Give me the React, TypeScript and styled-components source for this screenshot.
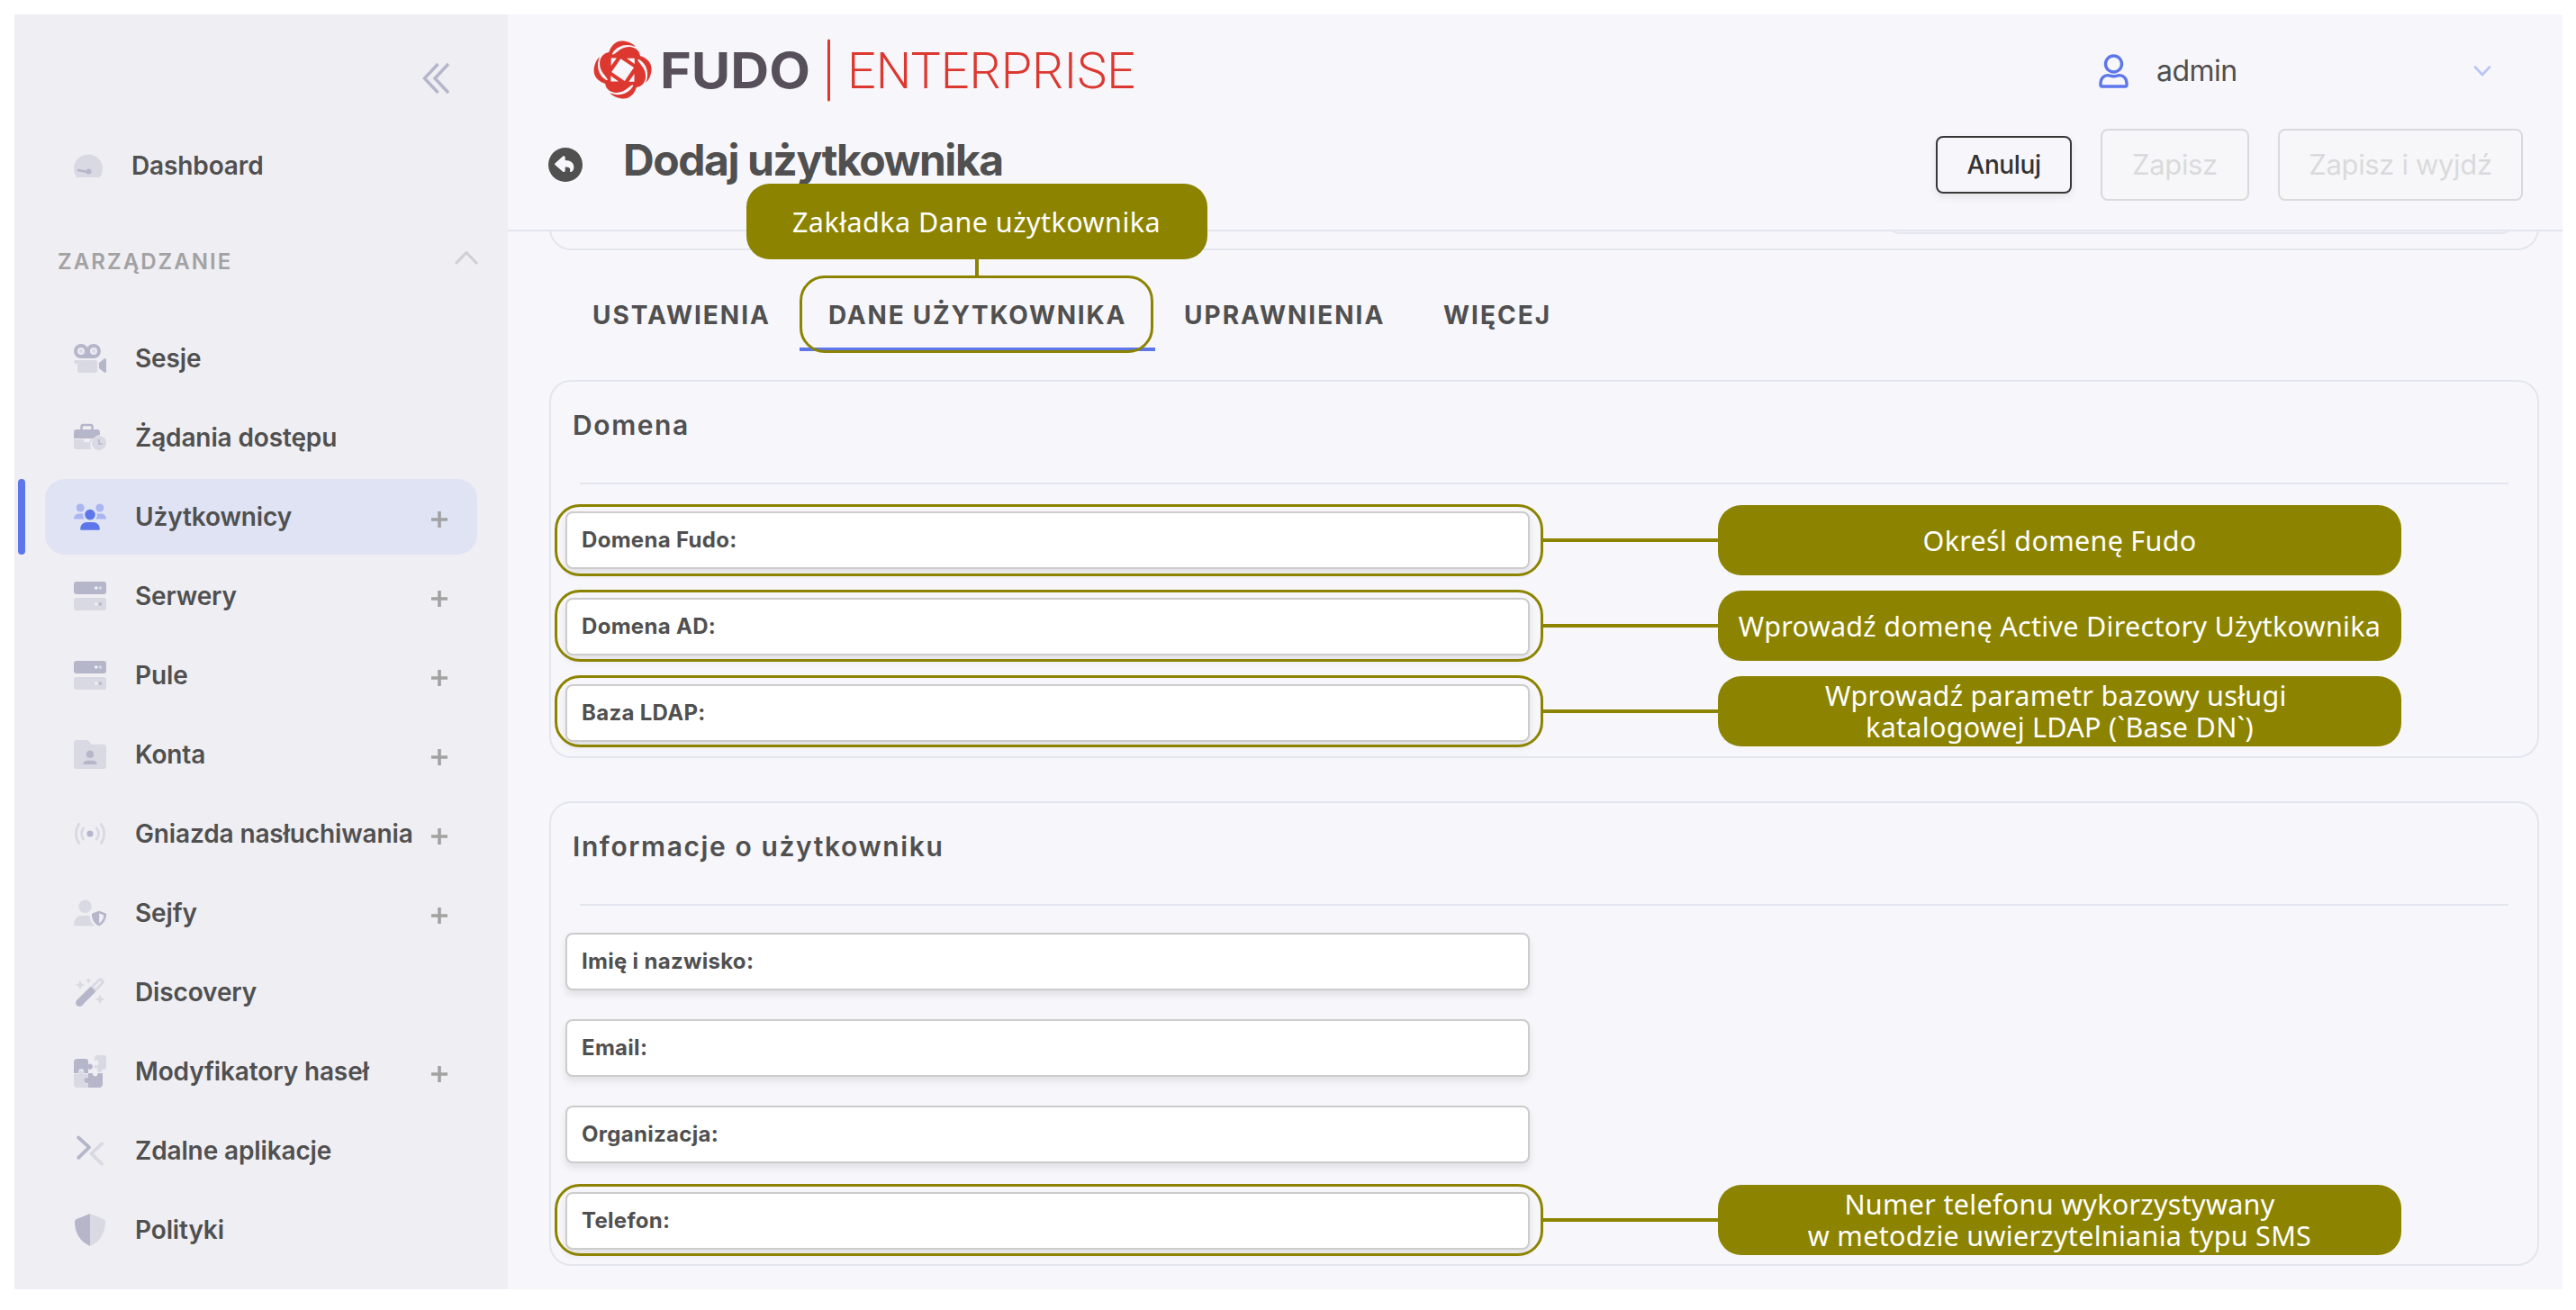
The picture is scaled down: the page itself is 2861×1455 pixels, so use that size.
import React from "react";
import styled, { createGlobalStyle } from "styled-components";

const color = {
  page: "#ffffff",
  sidebar: "#efeef3",
  main: "#f7f6fb",
  line: "#e3e6ee",
  text: "#505050",
  muted: "#a2a2a2",
  iconDark: "#b5b6ca",
  iconLight: "#d9d9e3",
  accent: "#5d77ea",
  accentLight: "#aab6f1",
  note: "#8c8400",
  disabled: "#dadadc",
};

const GlobalStyle = createGlobalStyle`
  * { box-sizing: border-box; }
  body {
    margin: 0;
    background: ${color.page};
    color: ${color.text};
    font-family: Inter, "Liberation Sans", sans-serif;
    -webkit-font-smoothing: antialiased;
  }
`;

/* ---------- frame ---------- */

const Frame = styled.div`
  display: flex;
  width: 2861px;
  height: 1455px;
  padding: 16px 15px 23px 16px;
  overflow: hidden;
`;

const Sidebar = styled.aside`
  flex: none;
  width: 548px;
  background: ${color.sidebar};
  display: flex;
  flex-direction: column;
`;

const Main = styled.main`
  flex: 1;
  min-width: 0;
  background: ${color.main};
  display: flex;
  flex-direction: column;
`;

/* ---------- sidebar ---------- */

const CollapseBar = styled.div`
  height: 126px;
  padding: 15px 64px 0 0;
  display: flex;
  align-items: center;
  justify-content: flex-end;
`;

const SectionHeader = styled.div`
  height: 130px;
  padding: 0 33px 0 48px;
  display: flex;
  align-items: center;
  justify-content: space-between;
`;

const SectionTitle = styled.span`
  font-size: 24px;
  font-weight: 600;
  letter-spacing: 2.05px;
  line-height: 30px;
  color: ${color.muted};
`;

const SectionToggle = styled.span`
  display: flex;
  padding-bottom: 11px;
`;

const NavList = styled.nav`
  display: flex;
  flex-direction: column;
  gap: 4px;
`;

const NavRow = styled.a<{ $active?: boolean }>`
  position: relative;
  flex: none;
  height: 84px;
  width: 480px;
  margin-left: 34px;
  padding: 0 33px 0 32px;
  border-radius: 22px;
  display: flex;
  align-items: center;
  background: ${(p) => (p.$active ? "#dfe3f4" : "transparent")};

  &::before {
    content: "";
    display: ${(p) => (p.$active ? "block" : "none")};
    position: absolute;
    left: -30px;
    top: 0;
    width: 8px;
    height: 84px;
    border-radius: 4px;
    background: ${color.accent};
  }
`;

const NavGlyph = styled.span`
  flex: none;
  display: flex;
  margin-right: 32px;
`;

const NavLabel = styled.span`
  flex: 1;
  min-width: 0;
  font-size: 28px;
  font-weight: 600;
  line-height: 34px;
  letter-spacing: -0.13px;
  white-space: nowrap;
`;

const AddMark = styled.span`
  flex: none;
  display: flex;
  padding-top: 6px;
`;

/* ---------- header ---------- */

const Header = styled.header`
  position: relative;
  z-index: 1;
  flex: none;
  height: 241px;
  border-bottom: 2px solid ${color.line};
  background: ${color.main};
  display: flex;
  flex-direction: column;
`;

const BrandRow = styled.div`
  height: 124px;
  padding: 0 79px 0 94px;
  display: flex;
  align-items: center;
  justify-content: space-between;
`;

const UserMenu = styled.div`
  width: 436px;
  padding-top: 2px;
  display: flex;
  align-items: center;
`;

const UserName = styled.span`
  flex: 1;
  padding-left: 31px;
  font-size: 32px;
  line-height: 40px;
  letter-spacing: -0.5px;
`;

const TitleRow = styled.div`
  height: 86px;
  padding: 0 44px 0 45px;
  display: flex;
  align-items: center;
`;

const Title = styled.h1`
  flex: 1;
  margin: 0;
  padding: 0 0 11px 45px;
  font-size: 48px;
  font-weight: 700;
  line-height: 58px;
  letter-spacing: -1.45px;
`;

const Actions = styled.div`
  display: flex;
  align-items: center;
  gap: 32px;
`;

const Button = styled.button<{ $width: number }>`
  width: ${(p) => p.$width}px;
  height: 64px;
  padding: 0;
  border: 2px solid #383838;
  border-radius: 8px;
  background: transparent;
  box-shadow: 0 4px 8px rgba(0, 0, 0, 0.08);
  font: 500 28px/34px Inter, sans-serif;
  letter-spacing: -0.4px;
  color: #333333;

  &:disabled {
    height: 80px;
    border-color: ${color.disabled};
    background: #f7f7f9;
    box-shadow: none;
    font-size: 31px;
    font-weight: 400;
    letter-spacing: -0.35px;
    color: ${color.disabled};
  }
`;

/* ---------- content ---------- */

const Content = styled.section`
  flex: 1;
  min-height: 0;
  padding: 0 26px 0 46px;
  display: flex;
  flex-direction: column;
`;

const ScrolledPanel = styled.div`
  flex: none;
  height: 81px;
  margin-top: -60px;
  padding: 0 26px 16px;
  border: 2px solid ${color.line};
  border-radius: 24px;
  display: flex;
  justify-content: flex-end;
`;

const ScrolledInner = styled.div`
  width: 696px;
  border: 2px solid ${color.line};
  border-radius: 14px;
`;

const Tabs = styled.div`
  flex: none;
  height: 144px;
  padding: 28px 0 0 16px;
  display: flex;
  align-items: flex-start;
`;

const Tab = styled.div<{ $width: number; $active?: boolean }>`
  position: relative;
  width: ${(p) => p.$width}px;
  height: 84px;
  padding: 8px 0 0 32px;
  border-bottom: 4px solid ${(p) => (p.$active ? color.accent : "transparent")};
  display: flex;
  align-items: center;
  font-size: 28px;
  font-weight: 700;
  letter-spacing: ${(p) => (p.$active ? 1.78 : 2)}px;
  white-space: nowrap;
`;

const Panel = styled.section`
  flex: none;
  margin-bottom: 48px;
  padding: 0 32px 16px 16px;
  border: 2px solid ${color.line};
  border-radius: 24px;
`;

const PanelTitle = styled.h2`
  margin: 0;
  height: 112px;
  padding: 29px 0 0 8px;
  font-size: 30px;
  font-weight: 600;
  line-height: 38px;
  letter-spacing: 1.6px;
`;

const PanelRule = styled.hr`
  height: 2px;
  margin: 0 0 30px 16px;
  border: 0;
  background: ${color.line};
`;

const Fields = styled.div`
  display: flex;
  flex-direction: column;
  gap: 32px;
`;

const Field = styled.div`
  position: relative;
  width: 1071px;
  height: 64px;
  padding-left: 16px;
  border: 2px solid #cccccc;
  border-radius: 8px;
  background: #ffffff;
  box-shadow: 0 5px 8px rgba(0, 0, 0, 0.09);
  display: flex;
  align-items: center;
`;

const FieldLabel = styled.label`
  font-size: 24px;
  font-weight: 700;
  line-height: 30px;
  letter-spacing: 0.3px;
`;

/* ---------- annotations laid over the form ---------- */

const FieldNote = styled.div<{ $top: number }>`
  position: absolute;
  left: -14px;
  top: ${(p) => p.$top - 3}px;
  height: 80px;
  display: flex;
  align-items: center;
`;

const NoteOutline = styled.span`
  width: 1098px;
  height: 80px;
  border: 3px solid ${color.note};
  border-radius: 28px;
`;

const NoteLink = styled.span`
  width: 194px;
  height: 4px;
  background: ${color.note};
`;

const NoteBox = styled.span`
  width: 759px;
  height: 78px;
  border-radius: 26px;
  background: ${color.note};
  color: #ffffff;
  display: flex;
  align-items: center;
  justify-content: center;
  text-align: center;
  white-space: pre;
  font: 400 30.5px/35px "Noto Sans", "Open Sans", sans-serif;
  letter-spacing: 0.3px;
`;

const TabNote = styled.div`
  position: absolute;
  z-index: 2;
  left: 0;
  top: -102px;
  width: 393px;
  display: flex;
  flex-direction: column;
  align-items: center;
`;

const TabNoteBox = styled(NoteBox)`
  width: 512px;
  height: 84px;
  flex: none;
  letter-spacing: 0.48px;
`;

const TabNoteLink = styled.span`
  width: 4px;
  height: 18px;
  background: ${color.note};
`;

const TabNoteOutline = styled.span`
  width: 393px;
  height: 86px;
  border: 3px solid ${color.note};
  border-radius: 28px;
`;

/* ---------- icons ---------- */

const D = color.iconDark;
const L = color.iconLight;

const NavIcon = ({ children, width = 36 }: { children: React.ReactNode; width?: number }) => (
  <svg width={width} height="44" viewBox={`0 0 ${width} 44`} fill="none">
    {children}
  </svg>
);

const DashboardIcon = () => (
  <NavIcon width={32}>
    <path d="M3.2 35A16 16 0 1 1 28.8 35Z" fill={L} />
    <path d="M5 27l10 2" stroke={D} strokeWidth="2.6" strokeLinecap="round" />
    <circle cx="16.5" cy="28.5" r="3" fill={D} />
  </NavIcon>
);

const SessionsIcon = () => (
  <NavIcon>
    <path d="M8 6a8 8 0 0 1 7 4a8 8 0 1 1 7 12H8A8 8 0 0 1 8 6Z" fill={D} />
    <circle cx="8" cy="14" r="4" fill="#ececf3" />
    <circle cx="22" cy="14" r="4" fill="#ececf3" />
    <circle cx="8" cy="14" r="2" fill={L} />
    <circle cx="22" cy="14" r="2" fill={L} />
    <path d="M2 24h22a2 2 0 0 1 2 2v10a2 2 0 0 1-2 2H6a2 2 0 0 1-2-2v-8H2a2 2 0 0 1 0-4Z" fill={L} />
    <path d="M28 27l5.600-4.600A1.500 1.500 0 0 1 36 23.500v13a1.500 1.500 0 0 1-2.400 1.100L28 33Z" fill={D} />
  </NavIcon>
);

const RequestsIcon = () => (
  <NavIcon>
    <path d="M8.500 14v-4a2 2 0 0 1 2-2h8a2 2 0 0 1 2 2v4" stroke={D} strokeWidth="2.500" />
    <path d="M3 13h23a3 3 0 0 1 3 3v3a10 10 0 0 0-7 4H0v-7a3 3 0 0 1 3-3Z" fill={D} />
    <path d="M0 24h11v3h7v-3h2.500a10 10 0 0 0-1 11H3a3 3 0 0 1-3-3Z" fill={L} />
    <circle cx="28" cy="28" r="8" fill={L} />
    <path d="M28 24v5h3.500" stroke={D} strokeWidth="1.500" />
  </NavIcon>
);

const UsersIcon = () => (
  <NavIcon>
    <circle cx="7.200" cy="12" r="4.500" fill={color.accentLight} />
    <circle cx="28.800" cy="12" r="4.500" fill={color.accentLight} />
    <path d="M0 24.600c0-3.600 2.400-6 6-6h4.300c-.4 2.300.1 4.200 1.400 6ZM36 24.600c0-3.600-2.400-6-6-6h-4.300c.4 2.300-.1 4.200-1.400 6Z" fill={color.accentLight} />
    <circle cx="18" cy="19.600" r="5.800" fill={color.accent} />
    <path d="M7.200 35.500C7.200 31 10.500 28 14.500 28h7c4 0 7.300 3 7.300 7.500 0 .8-.5 1.300-1.300 1.300h-19c-.8 0-1.300-.5-1.300-1.300Z" fill={color.accent} />
  </NavIcon>
);

const ServersIcon = () => (
  <NavIcon>
    <rect y="6" width="36" height="14" rx="3" fill={D} />
    <rect y="24" width="36" height="14" rx="3" fill={L} />
    <circle cx="24.800" cy="13" r="1.800" fill="#f4f4fa" />
    <circle cx="29.300" cy="13" r="1.800" fill={L} />
    <circle cx="24.800" cy="31" r="1.800" fill="#f0f0f6" />
    <circle cx="29.300" cy="31" r="1.800" fill={D} />
  </NavIcon>
);

const AccountsIcon = () => (
  <NavIcon>
    <path d="M3 6h11.500c1 0 1.600.4 2.300 1.200l2.700 3.600H33a3 3 0 0 1 3 3V35a3 3 0 0 1-3 3H3a3 3 0 0 1-3-3V9a3 3 0 0 1 3-3Z" fill={L} />
    <circle cx="18" cy="21.700" r="4.300" fill={D} />
    <path d="M10.300 33c0-2.600 1.900-4.200 4.200-4.200h7c2.300 0 4.200 1.600 4.200 4.200Z" fill={D} />
  </NavIcon>
);

const ListenersIcon = () => (
  <NavIcon>
    <circle cx="18" cy="22" r="3.600" fill={D} />
    <g stroke={L} strokeWidth="2.800" strokeLinecap="round">
      <path d="M5.800 11.400a18 18 0 0 0 0 21.200M30.200 11.400a18 18 0 0 1 0 21.200" />
      <path d="M10.600 16a10.500 10.500 0 0 0 0 12M25.400 16a10.500 10.500 0 0 1 0 12" />
    </g>
  </NavIcon>
);

const SafesIcon = () => (
  <NavIcon>
    <circle cx="12.600" cy="14.800" r="7.200" fill={L} />
    <path d="M0 35c0-6 4-10 9-10h8.500c.4 4.500 2 8.500 5.500 11.500H1.500C.6 36.500 0 36 0 35Z" fill={L} />
    <path d="M28 19.700l7 2.500c.6.200 1 .7 1 1.300 0 5.500-2.500 10.500-8 12.900-5.500-2.400-8-7.400-8-12.900 0-.6.4-1.100 1-1.300Z" fill={D} />
    <path d="M28.200 22.600l5 1.800c-.2 3.800-1.700 7-5 9Z" fill="#f0f0f6" />
  </NavIcon>
);

const DiscoveryIcon = () => (
  <NavIcon>
    <path d="M6.200 33.800L29.500 10.500" stroke={L} strokeWidth="8" strokeLinecap="round" />
    <path d="M23.500 16.500l5.500-5.500" stroke={color.sidebar} strokeWidth="2.400" strokeLinecap="round" />
    <path d="M6.300 33.700L21.500 18.500" stroke={D} strokeWidth="8" />
    <circle cx="6.300" cy="33.700" r="4" fill={D} />
    <path d="M7 8.500l1.600 4 4 1.500-4 1.600-1.600 4-1.600-4-4-1.600 4-1.500ZM16.300 5.700l1 2.400 2.400 1-2.400 1-1 2.400-1-2.400-2.400-1 2.400-1ZM29 24.500l1.600 4 4 1.500-4 1.600-1.600 4-1.600-4-4-1.600 4-1.500Z" fill={L} />
  </NavIcon>
);

const ModifiersIcon = () => (
  <NavIcon>
    <path d="M4 8h9a3 3 0 0 1 3 3v3.500a3 3 0 1 1 0 4.500v5h-5v-2a2.800 2.800 0 0 0-5.600 0v2H0V12a4 4 0 0 1 4-4Z" fill={D} />
    <path d="M0 25h5.500v-2a2.600 2.600 0 0 1 5 0v2H16v5a3 3 0 1 0 0 5v5H4a4 4 0 0 1-4-4Z" fill={L} />
    <path d="M16 24h5v1.500a2.800 2.800 0 0 0 5.400 0V24H32v12a4 4 0 0 1-4 4H16v-5.500a3 3 0 1 1 0-5Z" fill={D} />
    <path d="M26 4h7a3 3 0 0 1 3 3v10a3 3 0 0 1-3 3h-1.800a2.600 2.600 0 1 1-4.400-1.500H23V15a3 3 0 1 0 0-5V7a3 3 0 0 1 3-3Z" fill={L} />
  </NavIcon>
);

const RemoteAppsIcon = () => (
  <NavIcon>
    <g strokeWidth="3.800" strokeLinecap="round" strokeLinejoin="round">
      <path d="M5.200 7.500L17 18.300L5.200 29.800" stroke={D} />
      <path d="M31 14.300L19.500 25.300L31 36.700" stroke={L} />
    </g>
  </NavIcon>
);

const PoliciesIcon = () => (
  <NavIcon>
    <path d="M18 4L3 10C1.800 10.500 1 11.600 1 13c.1 11 5 22 17 27Z" fill={D} />
    <path d="M18 4l15 6c1.200.5 2 1.600 2 3-.1 11-5 22-17 27Z" fill={L} />
  </NavIcon>
);

const PlusIcon = () => (
  <svg width="18" height="18" viewBox="0 0 18 18" fill="none" stroke={color.muted} strokeWidth="3.600">
    <path d="M9 0v18M0 9h18" />
  </svg>
);

const CollapseIcon = () => (
  <svg width="32" height="36" viewBox="0 0 32 36" fill="none" stroke={D} strokeWidth="3.400">
    <path d="M18.500 2L3.500 18l15 16M30 2L15 18l15 16" />
  </svg>
);

const SectionChevron = () => (
  <svg width="26" height="16" viewBox="0 0 26 16" fill="none" stroke="#cfcfd5" strokeWidth="3" strokeLinecap="round" strokeLinejoin="round">
    <path d="M2 14L13 2.500L24 14" />
  </svg>
);

const BackIcon = () => (
  <svg width="38" height="38" viewBox="0 0 38 38">
    <circle cx="19" cy="19" r="19" fill={color.text} />
    <path
      d="M7.600 17.200L16.200 9.600c1-.9 2.500-.2 2.500 1.100v3.400c6.200.1 9.700 3 9.700 7.600 0 2.500-1.300 4.400-3 5.200-.8.4-1.500-.2-1.300-1 .8-2.900-.8-4.300-5.400-4.300v4c0 1.300-1.500 2-2.500 1.100L7.600 19.300c-.7-.6-.7-1.500 0-2.100Z"
      fill={color.main}
    />
  </svg>
);

const UserIcon = () => (
  <svg width="33" height="38" viewBox="0 0 33 38" fill="none" stroke={color.accent} strokeWidth="3.400">
    <circle cx="16.500" cy="11" r="9" />
    <path d="M10 23.600c2.200 0 3.300 1.200 6.500 1.200s4.300-1.200 6.500-1.200c4.600 0 8 3.800 8 8.400v2.300c0 1-.6 1.700-1.600 1.700H3.600C2.600 36 2 35.300 2 34.300V32c0-4.600 3.400-8.400 8-8.400Z" />
  </svg>
);

const MenuChevron = () => (
  <svg width="20" height="12" viewBox="0 0 20 12" fill="none" stroke="#b9c4f8" strokeWidth="2.600" strokeLinecap="round">
    <path d="M2 1.500l8 8.500l8-8.500" />
  </svg>
);

/* Emblem: four round petals, each with a thin crescent, around a hollow diamond. */
const Logo = () => (
  <svg width="604" height="72" viewBox="658 42 604 72">
    <g transform="translate(691.600 77.600)" fill="#dc3830">
      {[0, 90, 180, 270].map((a) => (
        <g key={a} transform={`rotate(${a})`}>
          <path d="M-17 -12C-15.500 -25 -9 -32 -1 -32C5 -32 11 -29.500 14.500 -25.500C5 -30 -7 -27 -11.500 -18L-12 -13Z" />
          <path d="M-14 -16C-7 -16 -4 -26 8 -25.500C15 -25 19.500 -20 19.500 -14L14 -8L-14 -10Z" />
        </g>
      ))}
      <rect x="-14.500" y="-14.500" width="29" height="29" />
      <g fill={color.main}>
        <path d="M-2.200 -12.400L12.400 -2.600L2.200 12.400L-12.400 2.400Z" />
        {[0, 90, 180, 270].map((a) => (
          <path key={a} d="M-12.900 -13.200h6.200l-6.200 8.700Z" transform={`rotate(${a})`} />
        ))}
      </g>
    </g>
    <text x="733" y="98" textLength="167" lengthAdjust="spacingAndGlyphs" fontFamily="Inter, sans-serif" fontWeight="700" fontSize="55" fill="#57505a">
      FUDO
    </text>
    <path d="M920.500 45v66" stroke="#dc3830" strokeWidth="3" strokeLinecap="round" />
    <text x="941" y="98" textLength="320" lengthAdjust="spacingAndGlyphs" fontFamily="Roboto, Inter, sans-serif" fontWeight="300" fontSize="56" fill="#dc3830">
      ENTERPRISE
    </text>
  </svg>
);

/* ---------- data ---------- */

type NavEntry = { label: string; icon: React.ReactNode; add?: boolean; active?: boolean };

const navigation: NavEntry[] = [
  { label: "Sesje", icon: <SessionsIcon /> },
  { label: "Żądania dostępu", icon: <RequestsIcon /> },
  { label: "Użytkownicy", icon: <UsersIcon />, add: true, active: true },
  { label: "Serwery", icon: <ServersIcon />, add: true },
  { label: "Pule", icon: <ServersIcon />, add: true },
  { label: "Konta", icon: <AccountsIcon />, add: true },
  { label: "Gniazda nasłuchiwania", icon: <ListenersIcon />, add: true },
  { label: "Sejfy", icon: <SafesIcon />, add: true },
  { label: "Discovery", icon: <DiscoveryIcon /> },
  { label: "Modyfikatory haseł", icon: <ModifiersIcon />, add: true },
  { label: "Zdalne aplikacje", icon: <RemoteAppsIcon /> },
  { label: "Polityki", icon: <PoliciesIcon /> },
];

type FieldEntry = { label: string; note?: string; top?: number };

const domainFields: FieldEntry[] = [
  { label: "Domena Fudo:", note: "Określ domenę Fudo", top: -7 },
  { label: "Domena AD:", note: "Wprowadź domenę Active Directory Użytkownika", top: -8 },
  { label: "Baza LDAP:", note: "Wprowadź parametr bazowy usługi \nkatalogowej LDAP (`Base DN`)", top: -9 },
];

const infoFields: FieldEntry[] = [
  { label: "Imię i nazwisko:" },
  { label: "Email:" },
  { label: "Organizacja:" },
  { label: "Telefon:", note: "Numer telefonu wykorzystywany\nw metodzie uwierzytelniania typu SMS", top: -8 },
];

const NavItem = ({ label, icon, add, active }: NavEntry) => (
  <NavRow $active={active}>
    <NavGlyph>{icon}</NavGlyph>
    <NavLabel>{label}</NavLabel>
    {add && (
      <AddMark>
        <PlusIcon />
      </AddMark>
    )}
  </NavRow>
);

const FormFields = ({ items }: { items: FieldEntry[] }) => (
  <Fields>
    {items.map((f) => (
      <Field key={f.label}>
        <FieldLabel>{f.label}</FieldLabel>
        {f.note && (
          <FieldNote $top={f.top ?? -7}>
            <NoteOutline />
            <NoteLink />
            <NoteBox>{f.note}</NoteBox>
          </FieldNote>
        )}
      </Field>
    ))}
  </Fields>
);

export default function App() {
  return (
    <>
      <GlobalStyle />
      <Frame>
        <Sidebar>
          <CollapseBar>
            <CollapseIcon />
          </CollapseBar>
          <NavItem label="Dashboard" icon={<DashboardIcon />} />
          <SectionHeader>
            <SectionTitle>ZARZĄDZANIE</SectionTitle>
            <SectionToggle>
              <SectionChevron />
            </SectionToggle>
          </SectionHeader>
          <NavList>
            {navigation.map((item) => (
              <NavItem key={item.label} {...item} />
            ))}
          </NavList>
        </Sidebar>
        <Main>
          <Header>
            <BrandRow>
              <Logo />
              <UserMenu>
                <UserIcon />
                <UserName>admin</UserName>
                <MenuChevron />
              </UserMenu>
            </BrandRow>
            <TitleRow>
              <BackIcon />
              <Title>Dodaj użytkownika</Title>
              <Actions>
                <Button $width={151}>Anuluj</Button>
                <Button $width={165} disabled>
                  Zapisz
                </Button>
                <Button $width={272} disabled>
                  Zapisz i wyjdź
                </Button>
              </Actions>
            </TitleRow>
          </Header>
          <Content>
            <ScrolledPanel>
              <ScrolledInner />
            </ScrolledPanel>
            <Tabs>
              <Tab $width={262}>USTAWIENIA</Tab>
              <Tab $width={395} $active>
                DANE UŻYTKOWNIKA
                <TabNote>
                  <TabNoteBox>Zakładka Dane użytkownika</TabNoteBox>
                  <TabNoteLink />
                  <TabNoteOutline />
                </TabNote>
              </Tab>
              <Tab $width={288}>UPRAWNIENIA</Tab>
              <Tab $width={184}>WIĘCEJ</Tab>
            </Tabs>
            <Panel>
              <PanelTitle>Domena</PanelTitle>
              <PanelRule />
              <FormFields items={domainFields} />
            </Panel>
            <Panel>
              <PanelTitle>Informacje o użytkowniku</PanelTitle>
              <PanelRule />
              <FormFields items={infoFields} />
            </Panel>
          </Content>
        </Main>
      </Frame>
    </>
  );
}
